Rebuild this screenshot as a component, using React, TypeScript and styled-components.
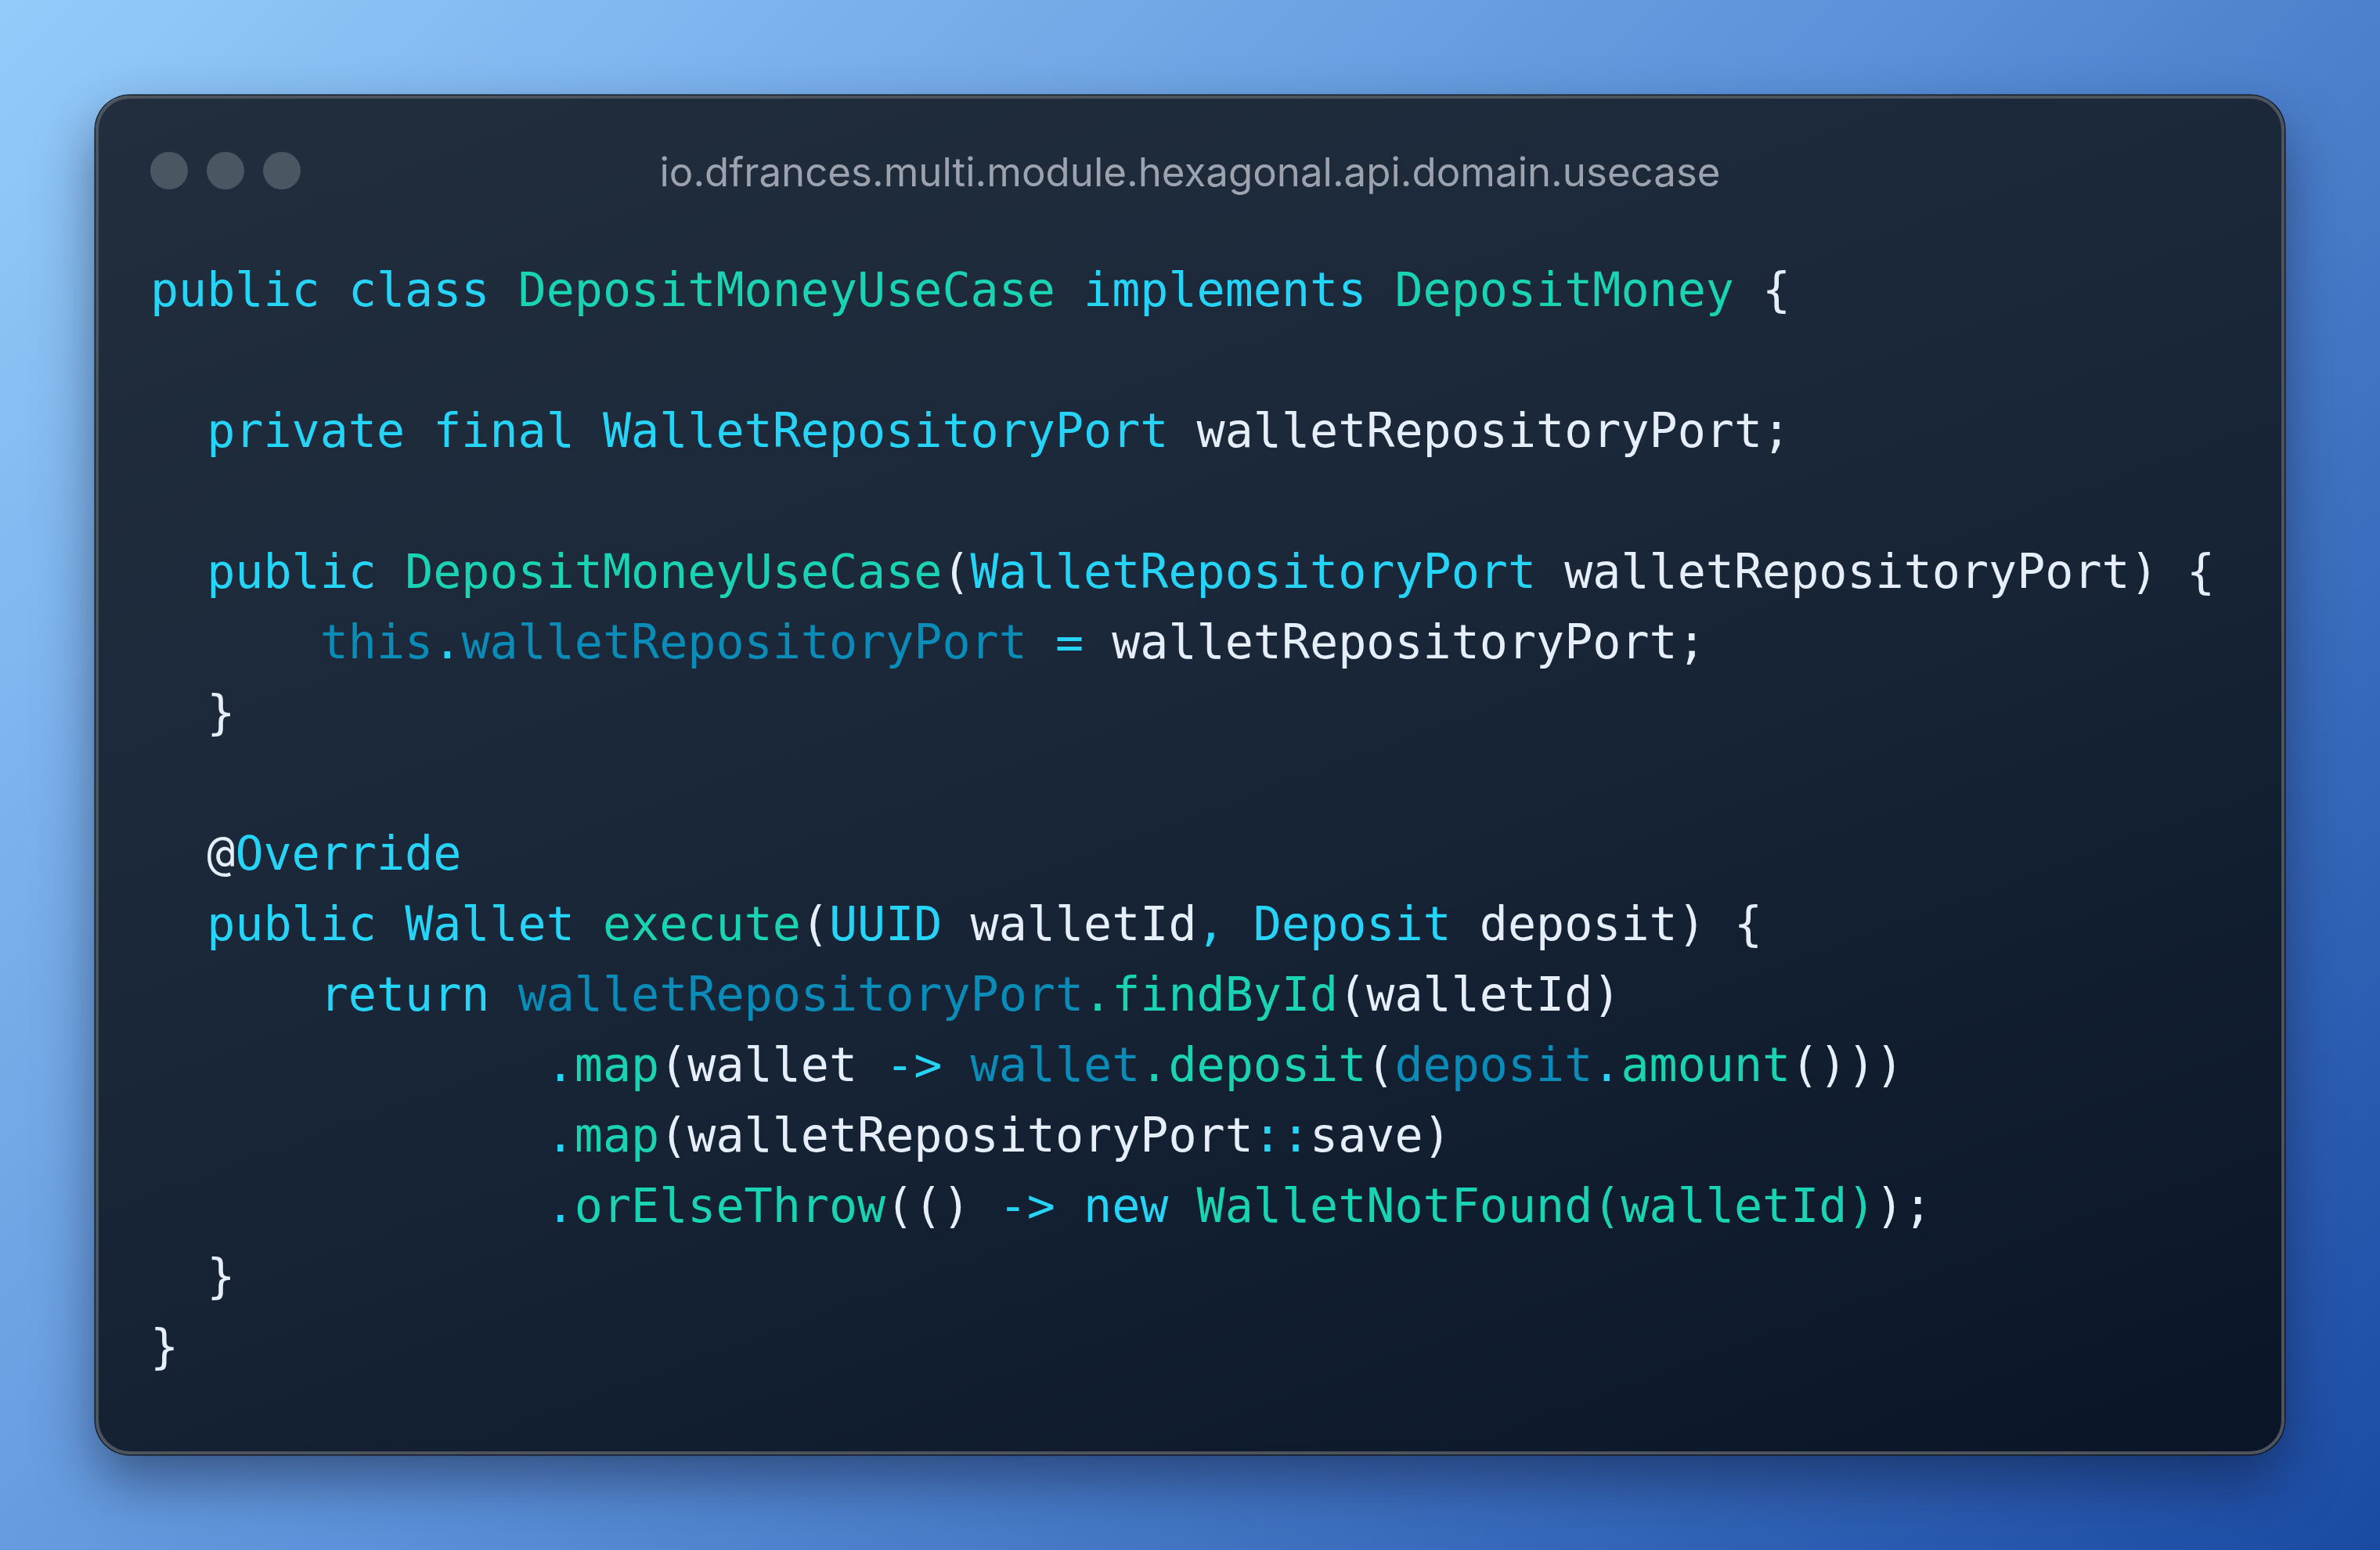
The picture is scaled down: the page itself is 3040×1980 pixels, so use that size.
import React from "react";
import styled, { createGlobalStyle } from "styled-components";

const GlobalStyle = createGlobalStyle`
  html, body {
    margin: 0;
    padding: 0;
  }
  body {
    width: 3040px;
    height: 1980px;
    overflow: hidden;
  }
`;

type Kind = "kw" | "ty" | "field" | "plain";

const colors: Record<Kind, string> = {
  kw: "#25d4f6",
  ty: "#19d3b3",
  field: "#0a8cb9",
  plain: "#e6eef9",
};

const Page = styled.div`
  width: 3040px;
  height: 1980px;
  display: flex;
  align-items: center;
  justify-content: center;
  background: linear-gradient(135deg, #95cbfb 0%, #5b8fd8 50%, #1b4aa3 100%);
`;

const Window = styled.div`
  box-sizing: border-box;
  width: 2796px;
  height: 1736px;
  border: 4px solid #4c545e;
  border-radius: 44px;
  background: linear-gradient(160deg, #222e3d 0%, #1a2738 45%, #0a1628 100%);
  box-shadow: 0 0 0 1.5px #151a21, 0 34px 70px rgba(12, 24, 52, 0.5);
  padding: 66px 66px 88px 66px;
  display: flex;
  flex-direction: column;
  gap: 85px;
`;

const TitleBar = styled.div`
  display: grid;
  grid-template-columns: 1fr auto 1fr;
  align-items: center;
  height: 48px;
`;

const Dots = styled.div`
  display: flex;
  gap: 24px;
`;

const Dot = styled.span`
  width: 48px;
  height: 48px;
  border-radius: 50%;
  background: #4b5663;
`;

const Title = styled.div`
  font-family: Inter, "Noto Sans", sans-serif;
  font-size: 51px;
  line-height: 48px;
  color: #9ca3ae;
  letter-spacing: 0;
  padding-top: 4px;
`;

const Code = styled.div`
  font-family: "DejaVu Sans Mono", "Liberation Mono", monospace;
  font-size: 60px;
  line-height: 90px;
`;

const Line = styled.div`
  white-space: pre;
  height: 90px;
`;

const Token = styled.span<{ $kind: Kind }>`
  color: ${(p) => colors[p.$kind]};
`;

type Tok = [Kind, string];

const I2 = "  ";
const I6 = "      ";
const I14 = "              ";

const lines: Tok[][] = [
  [["kw", "public"], ["plain", " "], ["kw", "class"], ["plain", " "], ["ty", "DepositMoneyUseCase"], ["plain", " "], ["kw", "implements"], ["plain", " "], ["ty", "DepositMoney"], ["plain", " {"]],
  [],
  [["plain", I2], ["kw", "private"], ["plain", " "], ["kw", "final"], ["plain", " "], ["kw", "WalletRepositoryPort"], ["plain", " walletRepositoryPort;"]],
  [],
  [["plain", I2], ["kw", "public"], ["plain", " "], ["ty", "DepositMoneyUseCase"], ["plain", "("], ["kw", "WalletRepositoryPort"], ["plain", " walletRepositoryPort) {"]],
  [["plain", I6], ["field", "this"], ["kw", "."], ["field", "walletRepositoryPort"], ["plain", " "], ["kw", "="], ["plain", " walletRepositoryPort;"]],
  [["plain", I2 + "}"]],
  [],
  [["plain", I2 + "@"], ["kw", "Override"]],
  [["plain", I2], ["kw", "public"], ["plain", " "], ["kw", "Wallet"], ["plain", " "], ["ty", "execute"], ["plain", "("], ["kw", "UUID"], ["plain", " walletId"], ["kw", ","], ["plain", " "], ["kw", "Deposit"], ["plain", " deposit) {"]],
  [["plain", I6], ["kw", "return"], ["plain", " "], ["field", "walletRepositoryPort"], ["ty", "."], ["ty", "findById"], ["plain", "(walletId)"]],
  [["plain", I14], ["kw", "."], ["ty", "map"], ["plain", "(wallet "], ["kw", "->"], ["plain", " "], ["field", "wallet"], ["ty", ".deposit"], ["plain", "("], ["field", "deposit"], ["kw", "."], ["ty", "amount"], ["plain", "()))"]],
  [["plain", I14], ["kw", "."], ["ty", "map"], ["plain", "(walletRepositoryPort"], ["kw", "::"], ["plain", "save)"]],
  [["plain", I14], ["kw", "."], ["ty", "orElseThrow"], ["plain", "(() "], ["kw", "->"], ["plain", " "], ["kw", "new"], ["plain", " "], ["ty", "WalletNotFound(walletId)"], ["plain", ");"]],
  [["plain", I2 + "}"]],
  [["plain", "}"]],
];

export default function App() {
  return (
    <>
      <GlobalStyle />
      <Page>
        <Window>
          <TitleBar>
            <Dots>
              <Dot />
              <Dot />
              <Dot />
            </Dots>
            <Title>io.dfrances.multi.module.hexagonal.api.domain.usecase</Title>
            <span />
          </TitleBar>
          <Code>
            {lines.map((line, i) => (
              <Line key={i}>
                {line.map(([kind, text], j) => (
                  <Token key={j} $kind={kind}>
                    {text}
                  </Token>
                ))}
              </Line>
            ))}
          </Code>
        </Window>
      </Page>
    </>
  );
}
